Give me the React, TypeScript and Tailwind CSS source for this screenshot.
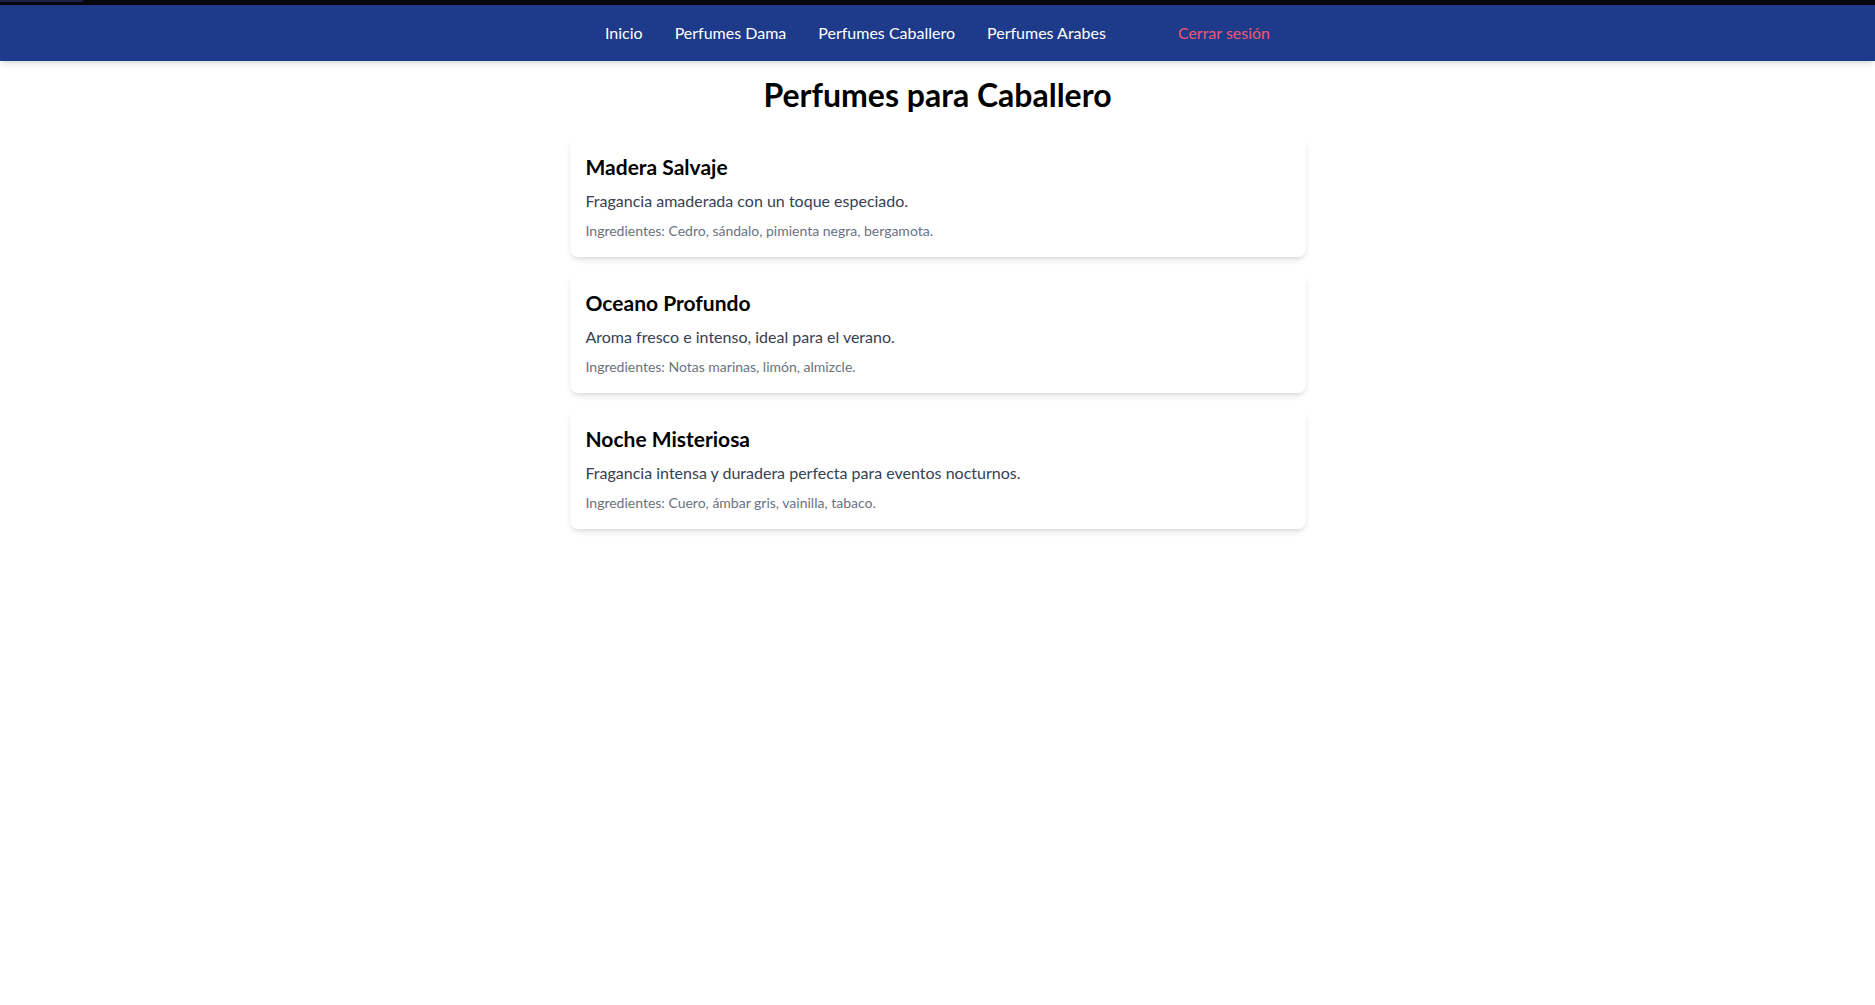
import React from "react";

interface Perfume {
  name: string;
  description: string;
  ingredients: string;
}

const perfumes: Perfume[] = [
  {
    name: "Madera Salvaje",
    description: "Fragancia amaderada con un toque especiado.",
    ingredients: "Cedro, sándalo, pimienta negra, bergamota.",
  },
  {
    name: "Oceano Profundo",
    description: "Aroma fresco e intenso, ideal para el verano.",
    ingredients: "Notas marinas, limón, almizcle.",
  },
  {
    name: "Noche Misteriosa",
    description: "Fragancia intensa y duradera perfecta para eventos nocturnos.",
    ingredients: "Cuero, ámbar gris, vainilla, tabaco.",
  },
];

const links = ["Inicio", "Perfumes Dama", "Perfumes Caballero", "Perfumes Arabes"];

const App: React.FC = () => {
  return (
    <div className="min-h-screen bg-white font-['Lato',sans-serif]">
      {/* top strip */}
      <div className="h-[5px] bg-[#08080c]">
        <div className="h-[2px] w-[83px] bg-[#1c1f4a]" />
      </div>

      <nav className="bg-[#1e3a8a] shadow-md">
        <div className="flex h-14 items-center justify-center">
          <ul className="flex items-center gap-8">
            {links.map((link) => (
              <li key={link}>
                <a href="#" className="text-base text-white">
                  {link}
                </a>
              </li>
            ))}
          </ul>
          <button className="ml-18 text-base text-[#f4566f]">Cerrar sesión</button>
        </div>
      </nav>

      <div className="mx-auto max-w-3xl p-4">
        <h1 className="mb-6 text-center text-[32px] leading-9 font-bold text-black">
          Perfumes para Caballero
        </h1>
        <div className="space-y-4">
          {perfumes.map((p) => (
            <div key={p.name} className="rounded-lg bg-white p-4 shadow-md">
              <h2 className="mb-2 text-[21px] leading-7 font-bold text-black">{p.name}</h2>
              <p className="text-gray-700">{p.description}</p>
              <p className="mt-2 text-sm text-gray-500">Ingredientes: {p.ingredients}</p>
            </div>
          ))}
        </div>
      </div>
    </div>
  );
};

export default App;
